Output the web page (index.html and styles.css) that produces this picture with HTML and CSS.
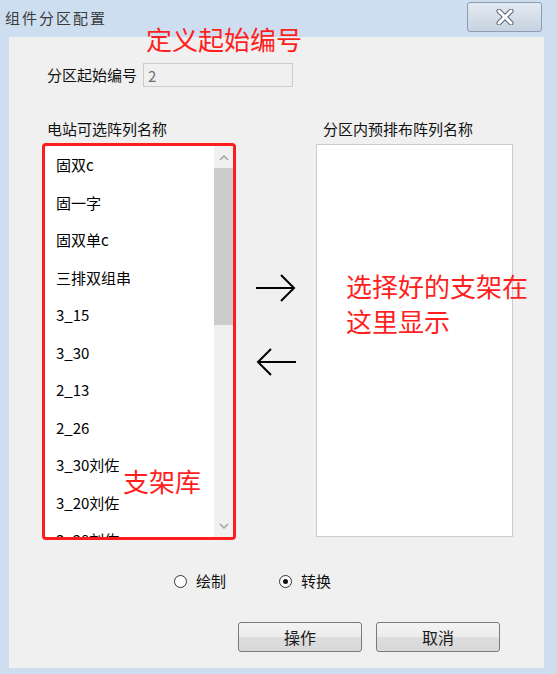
FILE: index.html
```html
<!DOCTYPE html>
<html lang="zh-CN">
<head>
    <meta charset="UTF-8">
    <meta name="viewport" content="width=device-width, initial-scale=1.0">
    <title>组件分区配置</title>
    <link rel="stylesheet" href="styles.css">
</head>
<body>
    <div class="window">
        <div class="titlebar">
            <span class="title">组件分区配置</span>
            <button class="close" type="button">
                <svg width="20" height="16" viewBox="0 0 20 16">
                    <path d="M4 2 L16 14 M16 2 L4 14" stroke="#5a6675" stroke-width="5" stroke-linecap="round"/>
                    <path d="M4 2 L16 14 M16 2 L4 14" stroke="#ffffff" stroke-width="3" stroke-linecap="round"/>
                </svg>
            </button>
        </div>

        <div class="client">
            <div class="start-row">
                <label class="start-label">分区起始编号</label>
                <input class="start-input" type="text" value="2" disabled>
            </div>

            <div class="lists">
                <div class="col col-src">
                    <div class="col-head">电站可选阵列名称</div>
                    <div class="listbox listbox-src">
                        <ul class="items">
                            <li>固双c</li>
                            <li>固一字</li>
                            <li>固双单c</li>
                            <li>三排双组串</li>
                            <li>3_15</li>
                            <li>3_30</li>
                            <li>2_13</li>
                            <li>2_26</li>
                            <li>3_30刘佐</li>
                            <li>3_20刘佐</li>
                            <li>3_20刘佐</li>
                        </ul>
                        <div class="scrollbar">
                            <div class="scroll-btn">
                                <svg width="10" height="7" viewBox="0 0 10 7"><path d="M1 6 L5 2 L9 6" fill="none" stroke="#a3a3a3" stroke-width="1.5"/></svg>
                            </div>
                            <div class="scroll-thumb"></div>
                            <div class="scroll-track"></div>
                            <div class="scroll-btn">
                                <svg width="10" height="7" viewBox="0 0 10 7"><path d="M1 1 L5 5 L9 1" fill="none" stroke="#a3a3a3" stroke-width="1.5"/></svg>
                            </div>
                        </div>
                    </div>
                </div>

                <div class="arrows">
                    <svg class="arrow" width="42" height="30" viewBox="0 0 42 30">
                        <path d="M1 15 H39 M26 2 L39 15 L26 28" fill="none" stroke="#000" stroke-width="2"/>
                    </svg>
                    <svg class="arrow" width="42" height="30" viewBox="0 0 42 30">
                        <path d="M41 15 H3 M16 2 L3 15 L16 28" fill="none" stroke="#000" stroke-width="2"/>
                    </svg>
                </div>

                <div class="col col-dst">
                    <div class="col-head">分区内预排布阵列名称</div>
                    <div class="listbox listbox-dst"></div>
                </div>
            </div>

            <div class="modes">
                <label class="radio"><span class="dot"></span>绘制</label>
                <label class="radio checked"><span class="dot"></span>转换</label>
            </div>

            <div class="actions">
                <button class="btn" type="button">操作</button>
                <button class="btn" type="button">取消</button>
            </div>
        </div>

        <div class="note note-start">定义起始编号</div>
        <div class="note note-lib">支架库</div>
        <div class="note note-dst">选择好的支架在<br>这里显示</div>
    </div>
</body>
</html>
```

FILE: styles.css
```css
body {
    margin: 0;
    background-color: #cddef0;
    font-family: "Noto Sans CJK SC", "Noto Sans", sans-serif;
}
.window {
    position: relative;
    width: 557px;
    height: 674px;
    overflow: hidden;
}
.titlebar {
    display: flex;
    justify-content: space-between;
    align-items: flex-start;
    height: 37px;
}
.title {
    margin: 8px 0 0 5px;
    font-size: 15px;
    line-height: 20px;
    letter-spacing: 2px;
    color: #3a3a3a;
}
.close {
    display: flex;
    align-items: center;
    justify-content: center;
    width: 75px;
    height: 30px;
    margin: 2px 15px 0 0;
    padding: 0;
    border: 1px solid #8d9cb0;
    border-radius: 3px;
    background: linear-gradient(#e3e9f1, #c7d3e1);
}
.client {
    box-sizing: border-box;
    height: 631px;
    margin: 0 13px 0 9px;
    padding-top: 26px;
    background-color: #f0f0f0;
}
.start-row {
    display: flex;
    align-items: center;
    gap: 6px;
    height: 24px;
    padding-left: 38px;
}
.start-label {
    font-size: 15px;
    line-height: 24px;
    color: #111;
}
.start-input {
    box-sizing: border-box;
    width: 150px;
    height: 24px;
    margin: 0;
    padding: 0 4px;
    border: 1px solid #cccccc;
    background-color: #f0f0f0;
    font-family: inherit;
    font-size: 15px;
    color: #6d6d6d;
}
.lists {
    display: flex;
    margin-top: 32px;
    padding-left: 33px;
}
.col-head {
    font-size: 15px;
    line-height: 20px;
    color: #111;
}
.col-src {
    width: 194px;
}
.col-src .col-head {
    padding-left: 5px;
}
.col-dst {
    width: 197px;
}
.col-dst .col-head {
    padding-left: 7px;
}
.listbox {
    box-sizing: border-box;
    background-color: #fff;
}
.listbox-src {
    display: flex;
    height: 397px;
    margin-top: 4px;
    border: 3px solid #ff1c1c;
    border-radius: 4px;
    overflow: hidden;
}
.listbox-dst {
    height: 393px;
    margin-top: 5px;
    border: 1px solid #cbcbcb;
}
.items {
    flex: 1;
    margin: 0;
    padding: 0 0 0 11px;
    list-style: none;
    overflow: hidden;
}
.items li {
    height: 37.5px;
    font-size: 15px;
    line-height: 37.5px;
    color: #000;
    white-space: nowrap;
}
.scrollbar {
    display: flex;
    flex-direction: column;
    width: 19px;
    background-color: #f0f0f0;
}
.scroll-btn {
    display: flex;
    align-items: center;
    justify-content: center;
    height: 22px;
}
.scroll-thumb {
    height: 157px;
    background-color: #cdcdcd;
}
.scroll-track {
    flex: 1;
}
.arrows {
    display: flex;
    flex-direction: column;
    align-items: center;
    gap: 44px;
    width: 80px;
    padding-top: 154px;
}
.modes {
    display: flex;
    align-items: center;
    gap: 53px;
    height: 20px;
    margin-top: 31px;
    padding-left: 165px;
}
.radio {
    display: flex;
    align-items: center;
    gap: 9px;
    font-size: 15px;
    line-height: 20px;
    color: #111;
}
.dot {
    box-sizing: border-box;
    display: flex;
    align-items: center;
    justify-content: center;
    width: 13px;
    height: 13px;
    border: 1px solid #333;
    border-radius: 50%;
    background-color: #fff;
}
.checked .dot::after {
    content: "";
    width: 5px;
    height: 5px;
    border-radius: 50%;
    background-color: #111;
}
.actions {
    display: flex;
    gap: 14px;
    margin-top: 31px;
    padding-left: 229px;
}
.btn {
    width: 124px;
    height: 30px;
    margin: 0;
    padding: 0;
    border: 1px solid #7a7a7a;
    border-radius: 3px;
    background: linear-gradient(#f3f3f3 0%, #ececec 48%, #dddddd 52%, #d8d8d8 100%);
    font-family: inherit;
    font-size: 16px;
    line-height: 26px;
    color: #1a1a1a;
}
.note {
    position: absolute;
    font-size: 26px;
    color: #ff1f1f;
    white-space: nowrap;
}
.note-start {
    left: 146px;
    top: 24px;
    line-height: 30px;
}
.note-lib {
    left: 123px;
    top: 466px;
    line-height: 30px;
}
.note-dst {
    left: 346px;
    top: 268px;
    line-height: 35px;
}
```
